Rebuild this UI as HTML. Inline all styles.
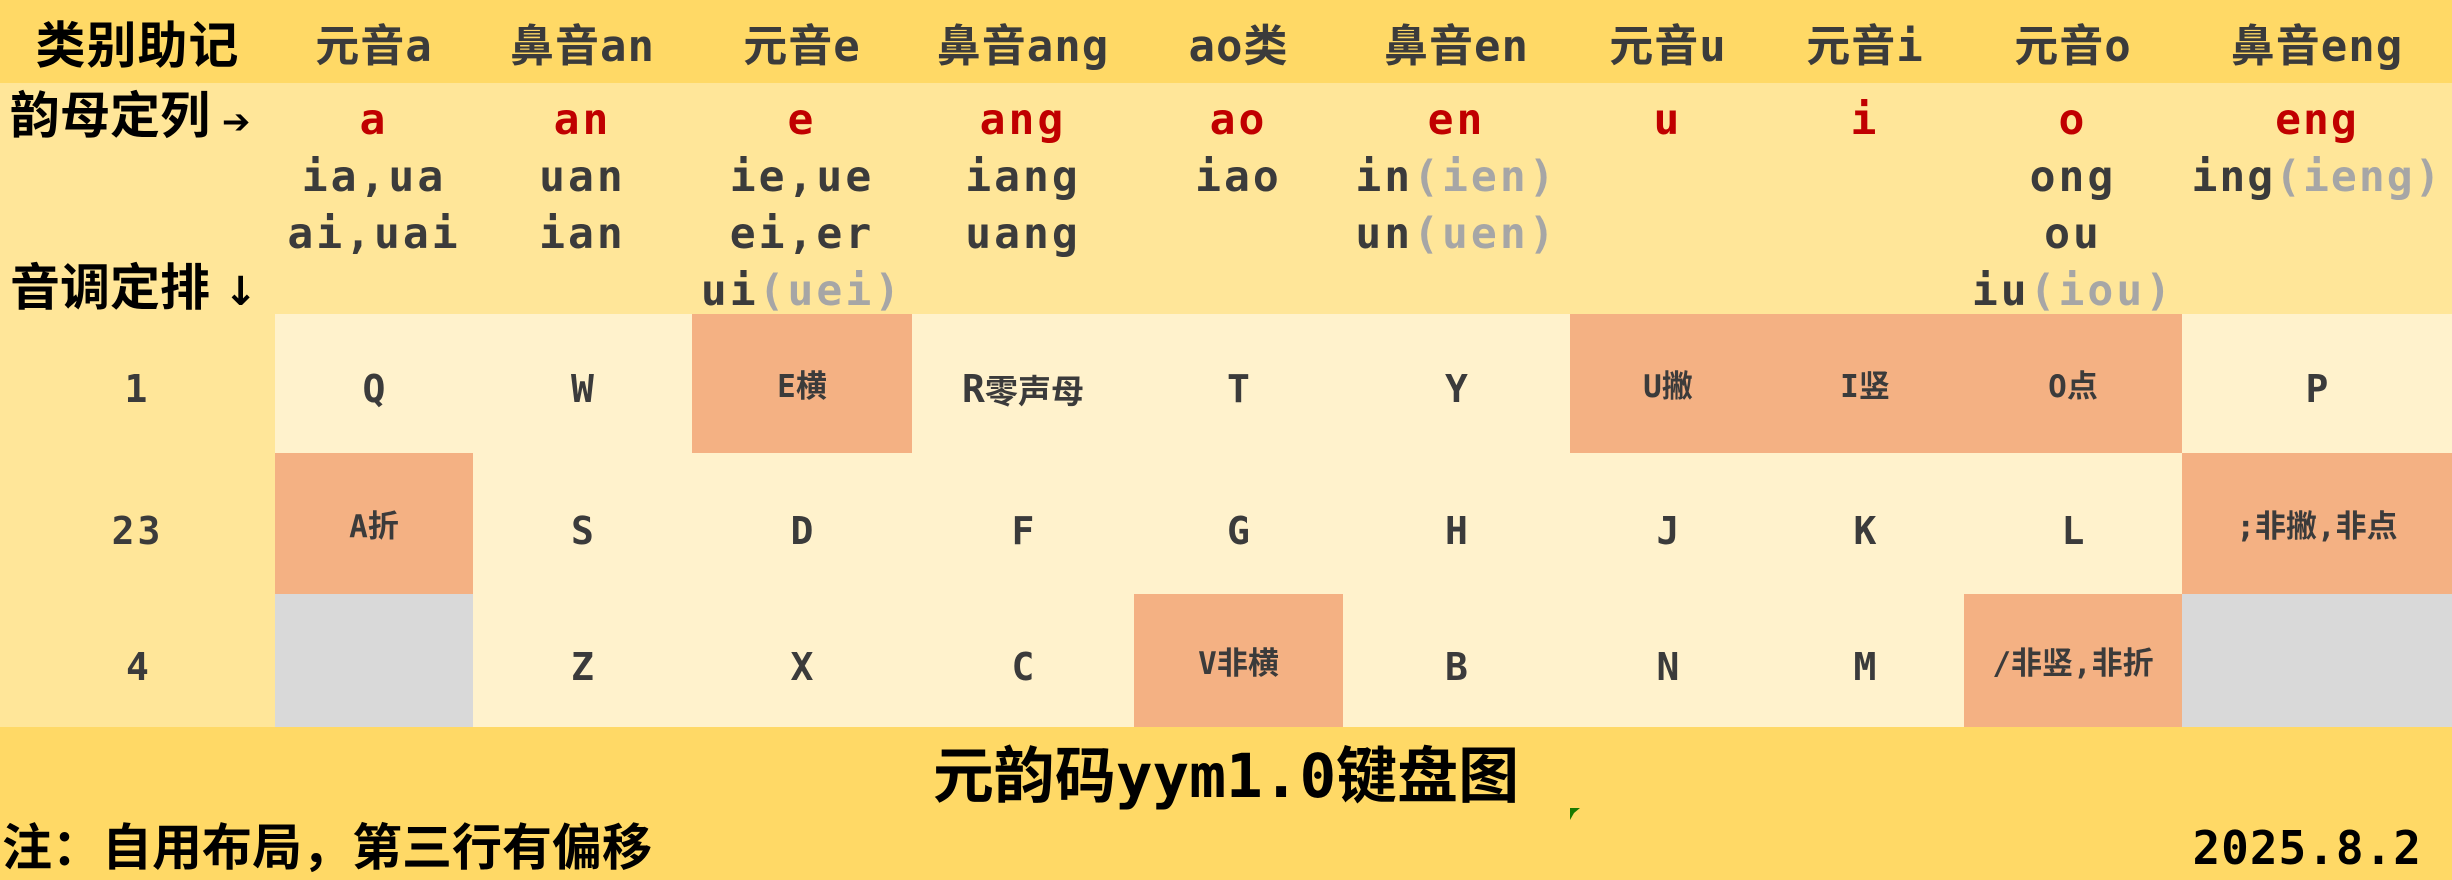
<!DOCTYPE html>
<html><head><meta charset="utf-8"><style>
*{margin:0;padding:0;box-sizing:border-box}
body{width:2452px;height:880px;overflow:hidden;background:#FFE699;position:relative;font-family:"DejaVu Sans Mono","Noto Sans CJK SC",monospace;font-weight:bold;color:#3b3b3b}
.a{position:absolute}
.c{position:absolute;display:flex;align-items:center;justify-content:center;text-align:center;white-space:nowrap}
.hd{top:0;height:83px;font-size:44px;letter-spacing:1px}
.k{font-size:38px}
.ks{font-size:31px}
.r{color:#C00000}
.g{color:#A6A6A6}
.lines{position:absolute;top:92px;font-size:43px;line-height:57px;text-align:center;white-space:nowrap;letter-spacing:3px}
.lbl{font-family:"Liberation Sans","Noto Sans CJK SC",sans-serif;color:#000}
</style></head><body>
<div class="a" style="left:0;top:0;width:2452px;height:83px;background:#FFD966"></div>
<div class="a" style="left:0;top:727px;width:2452px;height:153px;background:#FFD966"></div>
<div class="a" style="left:275px;top:314px;width:2177px;height:413px;background:#FFF2CC"></div>
<div class="a" style="left:692px;top:314px;width:220px;height:139px;background:#F4B183"></div>
<div class="a" style="left:1570px;top:314px;width:612px;height:139px;background:#F4B183"></div>
<div class="a" style="left:275px;top:453px;width:198px;height:141px;background:#F4B183"></div>
<div class="a" style="left:2182px;top:453px;width:270px;height:141px;background:#F4B183"></div>
<div class="a" style="left:275px;top:594px;width:198px;height:133px;background:#D9D9D9"></div>
<div class="a" style="left:1134px;top:594px;width:209px;height:133px;background:#F4B183"></div>
<div class="a" style="left:1964px;top:594px;width:218px;height:133px;background:#F4B183"></div>
<div class="a" style="left:2182px;top:594px;width:270px;height:133px;background:#D9D9D9"></div>

<div class="c hd lbl" style="left:0;width:275px;font-size:50px">类别助记</div>
<div class="c hd" style="left:275px;width:198px">元音a</div>
<div class="c hd" style="left:473px;width:219px">鼻音an</div>
<div class="c hd" style="left:692px;width:220px">元音e</div>
<div class="c hd" style="left:912px;width:222px">鼻音ang</div>
<div class="c hd" style="left:1134px;width:209px">ao类</div>
<div class="c hd" style="left:1343px;width:227px">鼻音en</div>
<div class="c hd" style="left:1570px;width:196px">元音u</div>
<div class="c hd" style="left:1766px;width:198px">元音i</div>
<div class="c hd" style="left:1964px;width:218px">元音o</div>
<div class="c hd" style="left:2182px;width:270px">鼻音eng</div>

<div class="a lbl" style="left:10px;top:86px;line-height:60px;font-size:50px">韵母定列<span style="font-family:'DejaVu Sans';font-size:34px"> ➔</span></div>
<div class="a lbl" style="left:10px;top:258px;line-height:60px;font-size:50px">音调定排<span style="font-family:'DejaVu Sans';font-size:40px"> ↓</span></div>

<div class="lines" style="left:275px;width:198px"><span class="r">a</span><br>ia,ua<br>ai,uai</div>
<div class="lines" style="left:473px;width:219px"><span class="r">an</span><br>uan<br>ian</div>
<div class="lines" style="left:692px;width:220px"><span class="r">e</span><br>ie,ue<br>ei,er<br>ui<span class="g">(uei)</span></div>
<div class="lines" style="left:912px;width:222px"><span class="r">ang</span><br>iang<br>uang</div>
<div class="lines" style="left:1134px;width:209px"><span class="r">ao</span><br>iao</div>
<div class="lines" style="left:1343px;width:227px"><span class="r">en</span><br>in<span class="g">(ien)</span><br>un<span class="g">(uen)</span></div>
<div class="lines" style="left:1570px;width:196px"><span class="r">u</span></div>
<div class="lines" style="left:1766px;width:198px"><span class="r">i</span></div>
<div class="lines" style="left:1964px;width:218px"><span class="r">o</span><br>ong<br>ou<br>iu<span class="g">(iou)</span></div>
<div class="lines" style="left:2182px;width:270px;letter-spacing:2px"><span class="r">eng</span><br>ing<span class="g">(ieng)</span></div>

<div class="c k" style="left:0;width:275px;top:314px;height:150px;letter-spacing:3px">1</div>
<div class="c k" style="left:0;width:275px;top:453px;height:155px;letter-spacing:3px">23</div>
<div class="c k" style="left:0;width:275px;top:594px;height:145px">4</div>

<div class="c k" style="left:275px;width:198px;top:314px;height:150px">Q</div>
<div class="c k" style="left:473px;width:219px;top:314px;height:150px">W</div>
<div class="c ks" style="left:692px;width:220px;top:314px;height:139px">E横</div>
<div class="c k" style="left:912px;width:222px;top:314px;height:150px">R<span style="font-size:33px">零声母</span></div>
<div class="c k" style="left:1134px;width:209px;top:314px;height:150px">T</div>
<div class="c k" style="left:1343px;width:227px;top:314px;height:150px">Y</div>
<div class="c ks" style="left:1570px;width:196px;top:314px;height:139px">U撇</div>
<div class="c ks" style="left:1766px;width:198px;top:314px;height:139px">I竖</div>
<div class="c ks" style="left:1964px;width:218px;top:314px;height:139px">O点</div>
<div class="c k" style="left:2182px;width:270px;top:314px;height:150px">P</div>
<div class="c ks" style="left:275px;width:198px;top:453px;height:141px">A折</div>
<div class="c k" style="left:473px;width:219px;top:453px;height:155px">S</div>
<div class="c k" style="left:692px;width:220px;top:453px;height:155px">D</div>
<div class="c k" style="left:912px;width:222px;top:453px;height:155px">F</div>
<div class="c k" style="left:1134px;width:209px;top:453px;height:155px">G</div>
<div class="c k" style="left:1343px;width:227px;top:453px;height:155px">H</div>
<div class="c k" style="left:1570px;width:196px;top:453px;height:155px">J</div>
<div class="c k" style="left:1766px;width:198px;top:453px;height:155px">K</div>
<div class="c k" style="left:1964px;width:218px;top:453px;height:155px">L</div>
<div class="c ks" style="left:2182px;width:270px;top:453px;height:141px">;非撇,非点</div>
<div class="c k" style="left:473px;width:219px;top:594px;height:145px">Z</div>
<div class="c k" style="left:692px;width:220px;top:594px;height:145px">X</div>
<div class="c k" style="left:912px;width:222px;top:594px;height:145px">C</div>
<div class="c ks" style="left:1134px;width:209px;top:594px;height:133px">V非横</div>
<div class="c k" style="left:1343px;width:227px;top:594px;height:145px">B</div>
<div class="c k" style="left:1570px;width:196px;top:594px;height:145px">N</div>
<div class="c k" style="left:1766px;width:198px;top:594px;height:145px">M</div>
<div class="c ks" style="left:1964px;width:218px;top:594px;height:133px">/非竖,非折</div>

<div class="c" style="left:0;width:2452px;top:733px;height:74px;font-size:61px;color:#000">元韵码yym1.0键盘图</div>
<div class="a" style="left:1570px;top:808px;width:0;height:0;border-left:4px solid #1a7a00;border-top:5px solid #1a7a00;border-right:6px solid transparent;border-bottom:7px solid transparent"></div>
<div class="a lbl" style="left:2px;top:820px;line-height:56px;font-size:50px">注：自用布局，第三行有偏移</div>
<div class="a" style="right:30px;top:822px;line-height:52px;font-size:46px;color:#000;letter-spacing:1px">2025.8.2</div>
</body></html>
